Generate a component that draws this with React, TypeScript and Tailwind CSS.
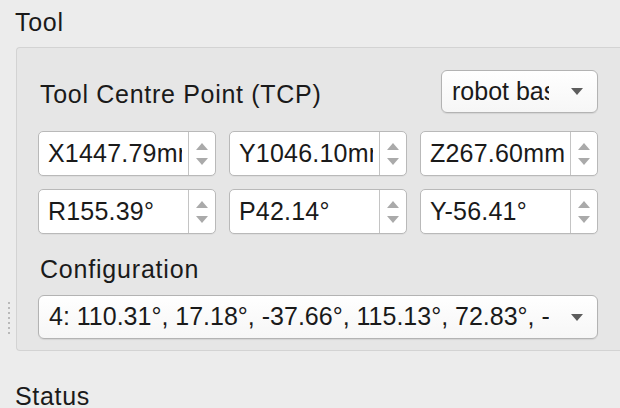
import React from "react";

function Spin({ value }: { value: string }) {
  return (
    <div className="flex h-[45px] flex-1 overflow-hidden rounded-[5px] border border-[#b9b9b9] bg-white shadow-[0_1px_0_rgba(0,0,0,0.04)]">
      <div className="flex flex-1 items-center overflow-hidden pl-[9px] pr-[6px]">
        <div className="overflow-hidden whitespace-nowrap text-[25px] tracking-[0.2px]">{value}</div>
      </div>
      <div className="flex w-[27px] shrink-0 flex-col items-center justify-center gap-[8px] border-l border-[#c4c4c4]">
        <span className="h-0 w-0 border-x-[6px] border-b-[7px] border-x-transparent border-b-[#aaaaaa]" />
        <span className="h-0 w-0 border-x-[6px] border-t-[7px] border-x-transparent border-t-[#aaaaaa]" />
      </div>
    </div>
  );
}

function Combo({ text, className }: { text: string; className: string }) {
  return (
    <div
      className={
        "flex items-center rounded-[6px] border border-[#b3b3b3] bg-gradient-to-b from-white to-[#f6f6f6] shadow-[0_1px_1px_rgba(0,0,0,0.08)] " +
        className
      }
    >
      <div className="flex-1 overflow-hidden whitespace-nowrap pl-[10px] text-[25px]">{text}</div>
      <span className="ml-[22px] mr-[14px] h-0 w-0 shrink-0 border-x-[6px] border-t-[7px] border-x-transparent border-t-[#5d5d5d]" />
    </div>
  );
}

export default function App() {
  const rows = [
    ["X1447.79mm", "Y1046.10mm", "Z267.60mm"],
    ["R155.39°", "P42.14°", "Y-56.41°"],
  ];
  return (
    <div className="relative h-[408px] w-[620px] overflow-hidden bg-[#ececec] font-['Liberation_Sans',Arial,sans-serif] text-[#1a1a1a]">
      {/* splitter handle */}
      <div className="absolute left-[8px] top-[302px] flex flex-col gap-[3px]">
        {[0, 1, 2, 3, 4, 5, 6].map((i) => (
          <span key={i} className="h-[2px] w-[2px] bg-[#b9b9b9]" />
        ))}
      </div>

      <div className="pl-[15px] pt-[7px]">
        <div className="text-[25px] leading-[30px] tracking-[0.7px]">Tool</div>

        <div className="ml-[1px] mt-[10px] w-[640px] rounded-l-[4px] border border-r-0 border-[#d3d3d3] bg-[#e6e6e6] pb-[11px] pl-[21px] pt-[22px]">
          <div className="flex w-[560px] flex-col">
            <div className="flex items-center justify-between">
              <div className="mt-[4px] pl-[2px] text-[25px] leading-[30px] tracking-[0.7px]">Tool Centre Point (TCP)</div>
              <Combo text="robot base" className="h-[43px] w-[157px]" />
            </div>

            <div className="mt-[18px] flex flex-col gap-[13px]">
              {rows.map((r, i) => (
                <div key={i} className="flex gap-[13px]">
                  {r.map((v) => (
                    <Spin key={v} value={v} />
                  ))}
                </div>
              ))}
            </div>

            <div className="mt-[20px] pl-[2px] text-[25px] leading-[30px] tracking-[0.8px]">Configuration</div>
            <Combo
              text="4: 110.31°, 17.18°, -37.66°, 115.13°, 72.83°, -"
              className="mt-[11px] h-[44px] w-[560px]"
            />
          </div>
        </div>

        <div className="mt-[30px] text-[25px] leading-[30px] tracking-[0.7px]">Status</div>
      </div>
    </div>
  );
}
